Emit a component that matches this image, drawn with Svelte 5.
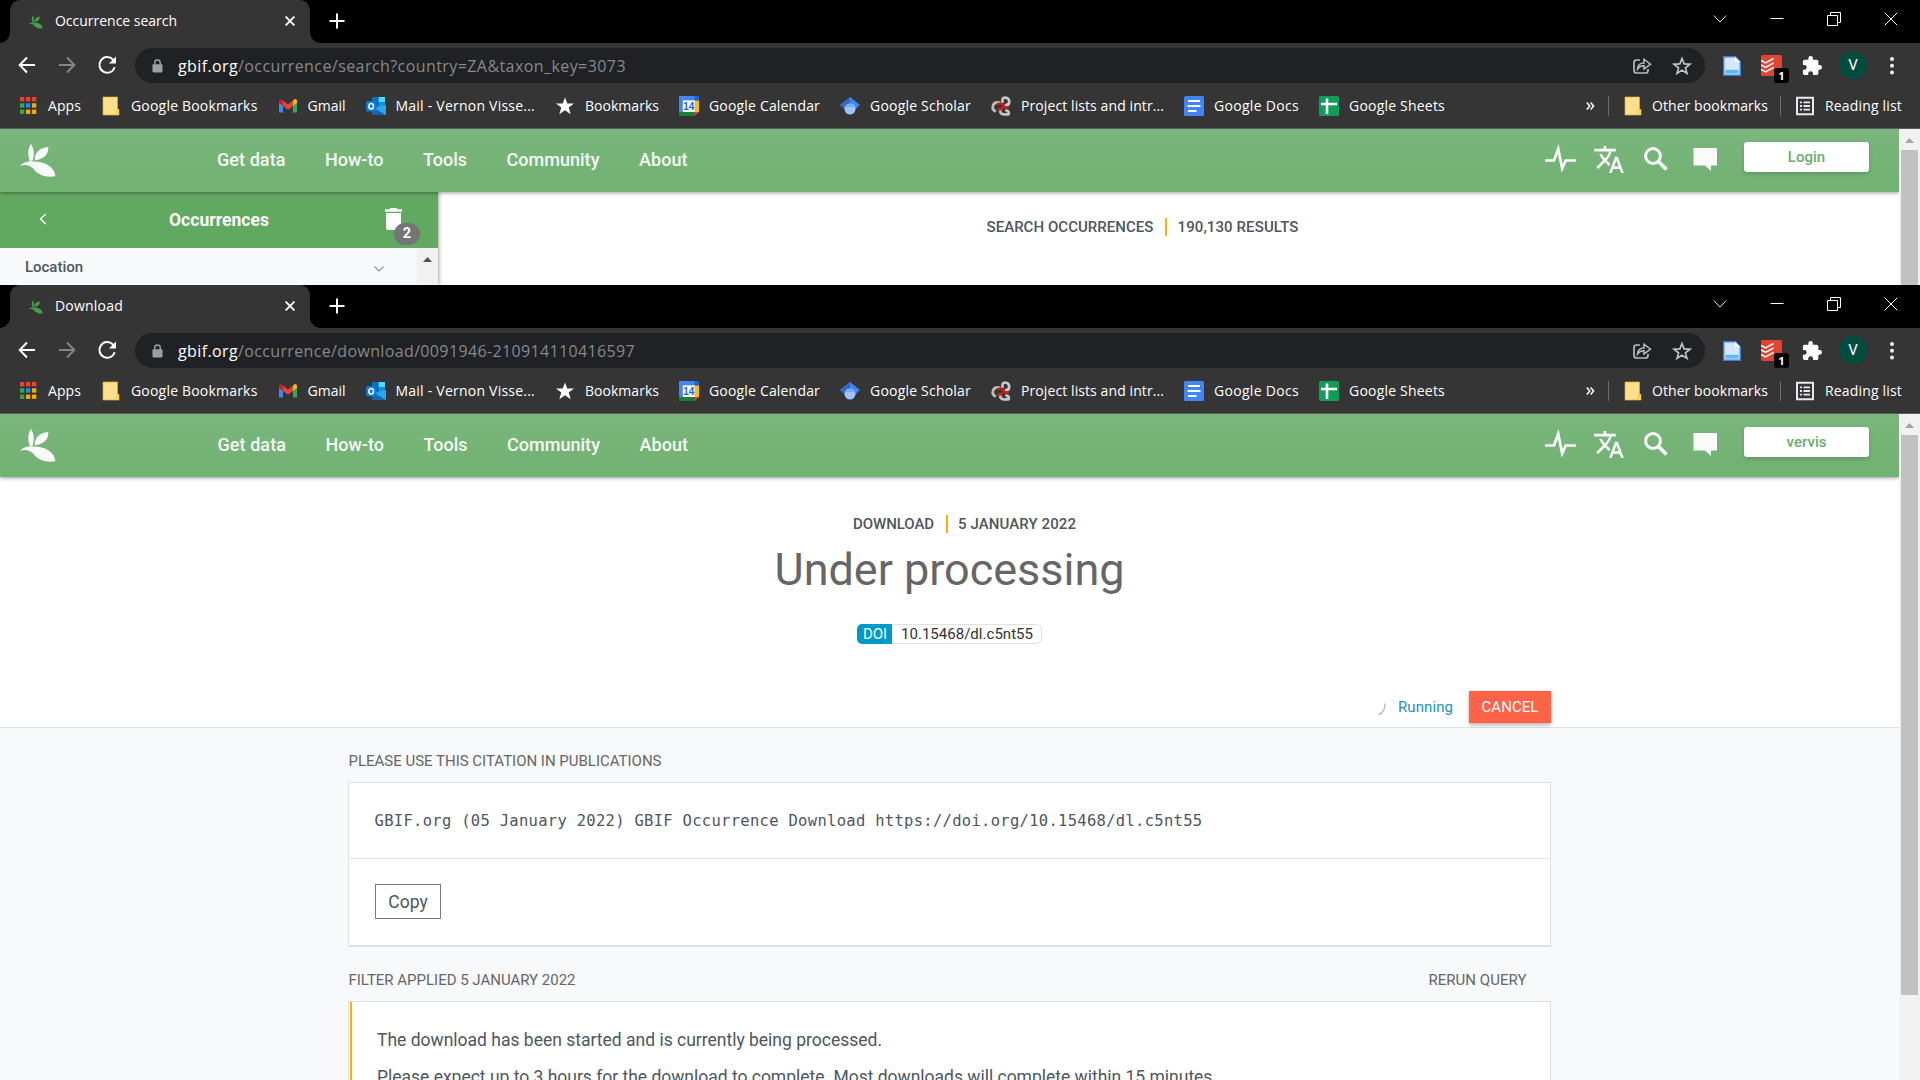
<script>
  const bookmarks = [
    { icon: 'apps', label: 'Apps', w: 33 },
    { icon: 'folder', label: 'Google Bookmarks', w: 126.5 },
    { icon: 'gmail', label: 'Gmail', w: 38 },
    { icon: 'outlook', label: 'Mail - Vernon Visse...', w: 139.5 },
    { icon: 'star', label: 'Bookmarks', w: 74 },
    { icon: 'calendar', label: 'Google Calendar', w: 111 },
    { icon: 'scholar', label: 'Google Scholar', w: 101 },
    { icon: 'project', label: 'Project lists and intr...', w: 143 },
    { icon: 'docs', label: 'Google Docs', w: 85 },
    { icon: 'sheets', label: 'Google Sheets', w: 96 }
  ];

  const nav = [
    { label: 'Get data', w: 68.5 },
    { label: 'How-to', w: 58.5 },
    { label: 'Tools', w: 44 },
    { label: 'Community', w: 93 },
    { label: 'About', w: 48.5 }
  ];

  // Tracks the text so that it fills the given width.
  function fit(node, width) {
    const natural = node.getBoundingClientRect().width;
    const spacing = (width - natural) / node.textContent.length;
    node.style.letterSpacing = `${spacing}px`;
  }
</script>

{#snippet leaf()}
  <path d="M94 175C104 190 105 212 98 229L92 230C84 212 84 192 94 175Z" />
  <path d="M147 185C146 208 135 222 106 225C104 203 120 187 147 185Z" />
  <path d="M60 244C70 232 84 227 95 230C125 226 166 240 168 274C140 279 118 269 107 258C98 246 84 233 60 244Z" />
{/snippet}

{#snippet bookmarkIcon(name)}
  <svg class="bm-icon" viewBox="0 0 20 20">
    {#if name === 'apps'}
      {#each ['#ea4335', '#ea4335', '#ea4335', '#34a853', '#1a8cff', '#f9ab00', '#34a853', '#f9ab00', '#f9ab00'] as color, i}
        <rect x={2 + (i % 3) * 6} y={1 + Math.floor(i / 3) * 6.3} width="4.3" height="4.3" fill={color} />
      {/each}
    {:else if name === 'folder'}
      <path d="M2 1h14.5v12.5H18V19H2z" fill="#ffe08a" stroke="#d9b034" stroke-width=".7" />
      <path d="M14.5 18.5v-3.8q0-1.5 2-1.5h1.5V19z" fill="#ffd257" />
    {:else if name === 'gmail'}
      <path d="M1 5v11.5h4V9z" fill="#4285f4" />
      <path d="M19 5v11.5h-4V9z" fill="#34a853" />
      <path d="M15 4.5V10l4-3.2V5q-.3-3-3-1.4z" fill="#fbbc04" />
      <path d="M1 6.8l4 3.2V4.5L4 3.6Q1.5 2.3 1 5z" fill="#c5221f" />
      <path d="M5 4.5l5 4 5-4V10l-5 3.8L5 10z" fill="#ea4335" />
    {:else if name === 'outlook'}
      <path d="M6 1h13v11H6z" fill="#1490df" />
      <path d="M12.5 1H19v5h-6.5z" fill="#50d9ff" />
      <path d="M6 6h6.5v6H6z" fill="#0364b8" />
      <path d="M12.5 1H6v5h6.5z" fill="#0a70c4" />
      <path d="M6 12l14-3v10H6z" fill="#28a8ea" />
      <path d="M6 11l14 8H6z" fill="#1565b0" />
      <rect x="0" y="5" width="10.5" height="10.5" rx="1" fill="#0f78d4" />
      <ellipse cx="5.2" cy="10.2" rx="2.3" ry="2.8" fill="none" stroke="#fff" stroke-width="1.5" />
    {:else if name === 'star'}
      <path d="M10 1.5l2.300 6H19l-5.300 4 2 6.700L10 14.300 4.300 18.200l2-6.700L1 7.500h6.700z" fill="#fff" />
    {:else if name === 'calendar'}
      <path d="M0 0h16v4.500H4.500V16H0z" fill="#4285f4" />
      <path d="M15.500 0H20v4.500h-4.500z" fill="#1967d2" />
      <path d="M15.500 4.500H20V16h-4.500z" fill="#fbbc04" />
      <path d="M0 16h15.500v4H0z" fill="#188038" />
      <path d="M15.500 16H20l-4.500 4z" fill="#ea4335" />
      <path d="M3.800 4.300h12V16h-12z" fill="#fff" />
      <text x="9.800" y="13.800" text-anchor="middle" class="cal-day">14</text>
    {:else if name === 'scholar'}
      <path d="M10 1L0 9l5 4.500h10L20 9z" fill="#4285f4" />
      <path d="M10 1L0 9l5 4.500L10 8z" fill="#356ac3" />
      <circle cx="10" cy="13" r="5.500" fill="#a0c3ff" />
      <path d="M5 11q5-6 10 0z" fill="#76a7fa" />
    {:else if name === 'project'}
      <g fill="none" stroke-width="2.700" stroke-linecap="round">
        <path d="M11.500 6Q10.800 1.600 14 1.500q4 .2 4.300 4.500-.3 3-3.300 3" stroke="#c9c9c9" />
        <path d="M8.500 6.500Q2.500 5.800 1.800 10.500q-.6 3 2 4.500" stroke="#bdbdbd" />
        <path d="M9.300 13.500Q8.500 18.300 13 18.300H17.500M17.800 18q.5-3-2.500-3.500" stroke="#c4c4c4" />
        <path d="M6.500 8.300q4.500-2.300 5.500.7t5 2.500M12.300 9.500Q12 13.500 7 14" stroke="#c81e1e" stroke-width="2.300" />
      </g>
    {:else if name === 'docs'}
      <rect width="20" height="20" rx="1.500" fill="#4285f4" />
      <path d="M4 5h12M3.500 10h13M4 15h8.500" stroke="#fff" stroke-width="2.200" />
    {:else if name === 'sheets'}
      <rect width="20" height="20" rx="1.500" fill="#0f9d58" />
      <path d="M2 8h16M8 2.500V18" stroke="#fff" stroke-width="2.600" />
    {:else if name === 'reading'}
      <path d="M2 1.800h16v16.400H2z" fill="none" stroke="#e8eaed" stroke-width="2" />
      <path d="M5 6.300h2M8.500 6.300H15M5 10h2M8.500 10H15M5 13.700h2M8.500 13.700H15" stroke="#e8eaed" stroke-width="1.800" />
    {/if}
  </svg>
{/snippet}

{#snippet chrome(tab, tabWidth, path, pathWidth)}
  <header class="chrome">
    <div class="tabs">
      <div class="tab">
        <svg class="favicon" viewBox="58 174 112 104" fill="#43a047">{@render leaf()}</svg>
        <span class="tab-title"><span use:fit={tabWidth}>{tab}</span></span>
        <svg class="tab-close" viewBox="0 0 10 10"><path d="M.6.6l8.800 8.800M9.400.6L.6 9.400" stroke="#fff" stroke-width="1.900" /></svg>
      </div>
      <svg class="plus" viewBox="0 0 16 16"><path d="M8 .5v15M.5 8h15" stroke="#fff" stroke-width="2" /></svg>
      <div class="controls">
        <svg viewBox="0 0 14 14"><path d="M.8 3.500l6.200 6.500 6.200-6.500" stroke-width=".9" /></svg>
        <svg viewBox="0 0 14 14"><path d="M.5 6.500h13" /></svg>
        <svg viewBox="0 0 14 14"><path d="M.5 3.500h10v10H.5zM3.500 3.500v-3h10v10h-3" /></svg>
        <svg viewBox="0 0 14 14"><path d="M.7.700l12.600 12.600M13.300.700L.7 13.300" /></svg>
      </div>
    </div>

    <div class="toolbar">
      <svg class="tool" viewBox="0 0 20 20"><path d="M18 10H3M10 2.500L2.700 10l7.300 7.500" stroke="#fff" /></svg>
      <svg class="tool" viewBox="0 0 20 20"><path d="M2 10h15M10 2.500l7.300 7.500-7.300 7.500" stroke="#858585" /></svg>
      <svg class="tool" viewBox="0 0 20 20">
        <path d="M17.700 12.200a7.800 7.800 0 1 1-1.900-7.800L18 7" stroke="#fff" />
        <path d="M19 1.500V8.500H12z" fill="#fff" />
      </svg>
      <div class="omnibox">
        <svg class="lock" viewBox="0 0 12 16">
          <path d="M3 7V4.500a3 3 0 0 1 6 0V7" fill="none" stroke="#9aa0a6" stroke-width="1.600" />
          <rect x=".5" y="6" width="11" height="9" rx="1.200" fill="#9aa0a6" />
        </svg>
        <span class="host" use:fit={60}>gbif.org</span><span class="path" use:fit={pathWidth}>{path}</span>
        <span class="spring"></span>
        <svg class="omni-icon" viewBox="0 0 20 20" fill="none" stroke="#b9bbbe" stroke-width="1.700">
          <path d="M8 4H4.500Q2 4 2 6.500v8Q2 17 4.500 17h9q2.500 0 2.500-2.500V13" />
          <path d="M5.500 13q.5-6 6.500-6V3.200L18.500 8.200 12 13V9.800q-4-.3-6.500 3.200z" stroke-width="1.500" />
        </svg>
        <svg class="omni-icon" viewBox="0 0 20 20" fill="none" stroke="#c4c6c9" stroke-width="1.600">
          <path d="M10 2.500l2.100 5.400 5.900.3-4.600 3.600 1.600 5.600-5-3.200-5 3.200 1.600-5.600L2 8.200l5.900-.3z" />
        </svg>
      </div>
      <div class="extensions">
        <svg class="ext-doc" viewBox="0 0 18 20">
          <path d="M.7.700h11.800L17.300 6v13.300H.7z" fill="#d6e6fb" stroke="#3b82dc" stroke-width="1.400" />
          <path d="M12 .7V6h5.300z" fill="#fff" />
          <path d="M2.500 13.800h13v3.700h-13z" fill="#5bb8f5" />
        </svg>
        <div class="todoist">
          <svg viewBox="0 0 21 21">
            <rect width="21" height="21" rx="1.800" fill="#e44332" />
            <path d="M0 5.500l4.500 2.400 8-4.400M0 10l4.500 2.400 8-4.400M0 14.500l4.500 2.400 8-4.400" fill="none" stroke="#fff" stroke-width="1.500" />
          </svg>
          <span class="count">1</span>
        </div>
        <svg class="puzzle" viewBox="1 1 22 22"><path fill="#fff" d="M20.500 11H19V7c0-1.100-.9-2-2-2h-4V3.500a2.500 2.500 0 0 0-5 0V5H4c-1.100 0-2 .9-2 2v3.800h1.500a2.700 2.700 0 0 1 0 5.400H2V20c0 1.100.9 2 2 2h3.800v-1.500a2.700 2.700 0 0 1 5.400 0V22H17c1.100 0 2-.9 2-2v-4h1.500a2.500 2.500 0 0 0 0-5z" /></svg>
        <span class="avatar">V</span>
        <svg class="dots" viewBox="0 0 4 18" fill="#f1f1f1"><circle cx="2" cy="2" r="2" /><circle cx="2" cy="8.700" r="2" /><circle cx="2" cy="15.400" r="2" /></svg>
      </div>
    </div>

    <nav class="bookmarks">
      {#each bookmarks as item}
        <div class="bookmark">
          {@render bookmarkIcon(item.icon)}
          <span class="bm-label" style:width="{item.w}px"><span use:fit={item.w}>{item.label}</span></span>
        </div>
      {/each}
      <div class="bookmark-end">
        <svg class="more" viewBox="0 0 9 8"><path d="M.8.600l3 3.400-3 3.400M4.600.600l3 3.400-3 3.400" fill="none" stroke="#fff" stroke-width="1.500" /></svg>
        <i class="rule"></i>
        {@render bookmarkIcon('folder')}
        <span class="bm-label other"><span use:fit={116}>Other bookmarks</span></span>
        <i class="rule"></i>
        {@render bookmarkIcon('reading')}
        <span class="bm-label reading"><span use:fit={77}>Reading list</span></span>
      </div>
    </nav>
  </header>
{/snippet}

{#snippet siteHeader(user, userWidth)}
  <div class="site-header">
    <svg class="logo" viewBox="58 174 112 104" fill="#fafafa">{@render leaf()}</svg>
    <nav class="site-nav">
      {#each nav as item}
        <span class="nav-item" style:width="{item.w}px"><span use:fit={item.w}>{item.label}</span></span>
      {/each}
    </nav>
    <div class="site-tools">
      <svg class="pulse" viewBox="0 0 31 28"><path d="M0 16.500h9L13.200 5l4 19.500 3.500-8H31" fill="none" stroke="#fafafa" stroke-width="2.700" /></svg>
      <svg class="translate" viewBox="1 2 22 20"><path fill="#fafafa" d="M12.870 15.070l-2.540-2.510.03-.03A17.520 17.520 0 0 0 14.070 6H17V4h-7V2H8v2H1v2h11.170C11.500 7.920 10.440 9.750 9 11.350 8.070 10.320 7.300 9.190 6.690 8h-2c.73 1.630 1.730 3.170 2.980 4.560l-5.090 5.020L4 19l5-5 3.110 3.110.76-2.040zM18.500 10h-2L12 22h2l1.120-3h4.750L21 22h2l-4.500-12zm-2.620 7l1.620-4.330L19.120 17h-3.240z" /></svg>
      <svg class="search" viewBox="0 0 24 24" fill="none" stroke="#fafafa"><circle cx="9" cy="9" r="7.400" stroke-width="3" /><path d="M14.500 14.500l8 8" stroke-width="3.800" /></svg>
      <svg class="chat" viewBox="0 0 24 23"><path d="M.5 0H24v17.500h-6V23l-6-5.500H.5z" fill="#fafafa" /></svg>
      <button class="user"><span use:fit={userWidth}>{user}</span></button>
    </div>
  </div>
{/snippet}

<div class="screen">
  <section class="window first">
    {@render chrome('Occurrence search', 122, '/occurrence/search?country=ZA&taxon_key=3073', 388)}
    <div class="viewport">
      <div class="page">
        {@render siteHeader('Login', 37.5)}
        <div class="search-layout">
          <aside>
            <div class="side-head">
              <svg class="back" viewBox="0 0 8 12"><path d="M6.800 1L1.500 6l5.300 5" fill="none" stroke="#fff" stroke-width="1.400" /></svg>
              <strong><span use:fit={100}>Occurrences</span></strong>
              <div class="trash">
                <svg viewBox="0 0 17 22"><path d="M0 1.300h4.500L5.500 0h6l1 1.300H17v2.400H0zM1 5h15v15q0 2-2 2H3q-2 0-2-2z" fill="#fff" /></svg>
                <span class="badge">2</span>
              </div>
            </div>
            <div class="side-body">
              <div class="facet">
                <span use:fit={58}>Location</span>
                <svg viewBox="0 0 10 6"><path d="M.5.500L5 5 9.500.500" fill="none" stroke="#8b959e" stroke-width="1.100" /></svg>
              </div>
              <div class="side-scroll"><svg viewBox="0 0 9 5"><path d="M0 5L4.500 0 9 5z" fill="#505050" /></svg></div>
            </div>
          </aside>
          <div class="crumbs results">
            <span use:fit={167}>SEARCH OCCURRENCES</span><i></i><span use:fit={121}>190,130 RESULTS</span>
          </div>
        </div>
      </div>
      <div class="scrollbar"><svg viewBox="0 0 9 5"><path d="M0 5L4.500 0 9 5z" fill="#a3a3a3" /></svg><div class="thumb"></div></div>
    </div>
  </section>

  <section class="window second">
    {@render chrome('Download', 68, '/occurrence/download/0091946-210914110416597', 397)}
    <div class="viewport">
      <div class="page">
        {@render siteHeader('vervis', 40)}
        <div class="hero">
          <div class="crumbs">
            <span use:fit={81}>DOWNLOAD</span><i></i><span use:fit={118}>5 JANUARY 2022</span>
          </div>
          <h1><span use:fit={350}>Under processing</span></h1>
          <div class="doi">
            <span class="doi-tag"><span use:fit={24}>DOI</span></span>
            <span class="doi-id"><span use:fit={132}>10.15468/dl.c5nt55</span></span>
          </div>
          <div class="status">
            <svg class="spinner" viewBox="0 0 8 13"><path d="M6.900.500Q7.500 8.500.6 11.800" fill="none" stroke="#bfbfbf" stroke-width="1.500" /></svg>
            <span class="running"><span use:fit={55}>Running</span></span>
            <button class="cancel"><span use:fit={57}>CANCEL</span></button>
          </div>
        </div>
        <main>
          <div class="section-head"><span use:fit={313}>PLEASE USE THIS CITATION IN PUBLICATIONS</span></div>
          <div class="card citation">
            <div class="cite-text"><span use:fit={828}>GBIF.org (05 January 2022) GBIF Occurrence Download https://doi.org/10.15468/dl.c5nt55</span></div>
            <div class="cite-actions"><button class="copy"><span use:fit={39.5}>Copy</span></button></div>
          </div>
          <div class="section-head">
            <span use:fit={227}>FILTER APPLIED 5 JANUARY 2022</span>
            <span use:fit={98}>RERUN QUERY</span>
          </div>
          <div class="card filter">
            <div class="notice">
              <p><span use:fit={505}>The download has been started and is currently being processed.</span></p>
              <p><span use:fit={840}>Please expect up to 3 hours for the download to complete. Most downloads will complete within 15 minutes.</span></p>
            </div>
          </div>
        </main>
      </div>
      <div class="scrollbar"><svg viewBox="0 0 9 5"><path d="M0 5L4.500 0 9 5z" fill="#a3a3a3" /></svg><div class="thumb"></div></div>
    </div>
  </section>
</div>

<style>
  :global(body) { margin: 0; overflow: hidden; }
  * { box-sizing: border-box; }
  svg { display: block; flex: none; }
  button { font: inherit; padding: 0; border: 0; }
  span { white-space: nowrap; }

  .screen { width: 1920px; height: 1080px; overflow: hidden; display: flex; flex-direction: column; background: #fff; }
  .window { display: flex; flex-direction: column; flex: none; overflow: hidden; }
  .first { height: 285px; }
  .second { height: 795px; }

  /* Browser chrome */
  .chrome { flex: none; height: 129px; background: #353535; border-bottom: 1px solid #5f5c61; font: 14px/20px "Open Sans", "Noto Sans", sans-serif; color: #fff; }
  .tabs { height: 43px; background: #000; display: flex; align-items: flex-start; padding-left: 10px; }
  .tab { position: relative; width: 300px; height: 43px; background: #353535; border-radius: 10px 10px 0 0; display: flex; align-items: center; padding-left: 18px; }
  .tab::before, .tab::after { content: ""; position: absolute; bottom: 0; width: 10px; height: 10px; }
  .tab::before { left: -10px; background: radial-gradient(circle at 0 0, #000 9.500px, #353535 10px); }
  .tab::after { right: -10px; background: radial-gradient(circle at 100% 0, #000 9.500px, #353535 10px); }
  .favicon { width: 15px; height: 14px; }
  .tab-title { width: 232px; margin-left: 12px; margin-top: -2px; }
  .tab-close { width: 10px; height: 10px; margin-left: -2px; margin-top: -1px; }
  .plus { width: 16px; height: 16px; margin: 13px 0 0 19px; }
  .controls { margin: 12px 22px 0 auto; display: flex; gap: 43px; }
  .controls svg { width: 14px; height: 14px; fill: none; stroke: #fff; stroke-width: 1; }

  .toolbar { height: 40px; padding: 5px 25px 0 17px; display: flex; align-items: center; }
  .tool { width: 20px; height: 20px; margin-right: 20px; margin-top: -2px; fill: none; stroke-width: 2; }
  .omnibox { width: 1570px; height: 35px; margin-left: -2px; border-radius: 18px; background: #202124; display: flex; align-items: center; padding: 0 13px 0 17px; font-size: 16px; line-height: 34px; }
  .lock { width: 11px; height: 16px; margin-right: 15px; }
  .path { color: #86898d; }
  .spring { flex: 1; }
  .omni-icon { width: 20px; height: 20px; margin-left: 20px; }
  .extensions { display: flex; align-items: center; margin-left: 18px; }
  .ext-doc { width: 18px; height: 20px; }
  .todoist { position: relative; width: 21px; height: 21px; margin-left: 20px; }
  .todoist svg { width: 21px; height: 21px; }
  .count { position: absolute; left: 13px; top: 13px; width: 15px; height: 15px; border-radius: 3px; background: #000; font: 700 11px/16px "Open Sans", sans-serif; text-align: center; }
  .puzzle { width: 20px; height: 20px; margin-left: 20px; }
  .avatar { width: 28px; height: 28px; margin-left: 17px; margin-top: -1px; border-radius: 50%; background: #004d40; font: 15px/28px Roboto, sans-serif; text-align: center; }
  .dots { width: 4px; height: 18px; margin-left: 23px; }

  .bookmarks { height: 45px; padding: 1px 18px 0; display: flex; align-items: center; gap: 20px; }
  .bookmark { display: flex; align-items: center; gap: 10px; }
  .bm-icon { width: 20px; height: 20px; overflow: visible; }
  .bm-label { display: block; }
  .cal-day { font: 700 10px "Liberation Sans", sans-serif; fill: #1967d2; }
  .bookmark-end { margin-left: auto; display: flex; align-items: center; }
  .more { width: 9px; height: 8px; margin: -1px 13px 0 0; }
  .rule { width: 1px; height: 20px; background: #6b6b6b; margin-right: 14px; }
  .other { width: 116px; margin: 0 12px 0 9px; }
  .reading { width: 77px; margin-left: 10px; }

  /* Web page */
  .viewport { flex: 1; display: flex; min-height: 0; font-family: Roboto, sans-serif; }
  .page { width: 1899px; display: flex; flex-direction: column; overflow: hidden; background: #fff; }
  .scrollbar { width: 21px; background: #f1f1f1; display: flex; flex-direction: column; align-items: center; padding-top: 9px; }
  .scrollbar svg { width: 9px; height: 5px; }
  .thumb { width: 17px; height: 560px; margin-top: 7px; background: #c1c1c1; flex: none; }

  .site-header { position: relative; z-index: 2; flex: none; height: 63px; background: linear-gradient(#7ab67c, #71b172); box-shadow: 0 1px 4px rgba(0, 0, 0, .4); display: flex; padding-left: 19px; }
  .logo { width: 37px; height: 35px; margin-top: 14px; }
  .site-nav { display: flex; gap: 39.500px; margin-left: 161px; font-weight: 500; font-size: 18px; line-height: 62px; color: #f5faf5; }
  .second .site-nav { margin-left: 161.500px; }
  .nav-item { display: block; }
  .site-tools { display: flex; align-items: flex-start; margin-left: auto; padding: 13px 30px 0 0; }
  .pulse { width: 31px; height: 28px; margin-top: 2px; }
  .translate { width: 30px; height: 27px; margin: 4px 0 0 18px; }
  .search { width: 24px; height: 24px; margin: 5px 0 0 20px; }
  .chat { width: 24px; height: 23px; margin: 6px 0 0 25px; }
  .user { width: 125px; height: 30px; margin-left: 27px; border-radius: 3px; background: #fff; color: #69ad6c; font-size: 15px; font-weight: 500; line-height: 30px; box-shadow: 0 2px 4px rgba(0, 0, 0, .16); }

  .search-layout { flex: 1; display: flex; }
  aside { width: 438px; display: flex; flex-direction: column; box-shadow: 1px 0 4px rgba(0, 0, 0, .35); }
  .side-head { height: 56px; background: #61a961; color: #fff; display: flex; align-items: center; padding-left: 39px; }
  .back { width: 8px; height: 12px; margin-top: -3px; }
  .side-head strong { width: 216px; margin-left: 122px; font-size: 17.500px; line-height: 56px; font-weight: 700; }
  .trash { position: relative; width: 17px; height: 22px; margin-top: -2px; }
  .trash svg { width: 17px; height: 22px; }
  .badge { position: absolute; left: 9px; top: 15px; width: 26px; height: 22px; border-radius: 11px; background: #757575; font-weight: 700; font-size: 14.500px; line-height: 22px; text-align: center; }
  .side-body { flex: 1; display: flex; background: #f8f9fb; }
  .facet { width: 417px; display: flex; align-items: center; justify-content: space-between; padding: 0 33px 0 25px; font-size: 15px; font-weight: 500; color: #4e565f; }
  .facet svg { width: 10px; height: 6px; margin-top: 4px; }
  .side-scroll { width: 21px; background: #f1f1f1; display: flex; justify-content: center; padding-top: 9px; }
  .side-scroll svg { width: 9px; height: 5px; }

  .crumbs { display: flex; justify-content: center; align-items: center; height: 18px; font-size: 15px; line-height: 18px; font-weight: 500; color: #4e565f; }
  .crumbs i { width: 2px; height: 18px; margin: 0 10.500px 0 11.500px; background: #ffb000; }
  .results { margin: 26px 0 0 548.500px; align-self: flex-start; }

  .hero { flex: none; height: 251px; padding-top: 38px; border-bottom: 1px solid #dbe3e7; display: flex; flex-direction: column; align-items: center; }
  .hero .crumbs { padding-left: 30px; }
  h1 { margin: 10px 0 0; font-size: 45px; line-height: 54px; font-weight: 400; color: #666; }
  .doi { height: 20px; margin-top: 27px; display: flex; font-size: 15px; line-height: 18px; }
  .doi-tag { width: 35px; border-radius: 5px 0 0 5px; background: #09c; color: #fff; padding-left: 6px; line-height: 20px; }
  .doi-id { width: 150px; border: 1px solid #dbe3e7; border-left: 0; border-radius: 0 6px 6px 0; padding-left: 9px; color: #333; }
  .status { width: 1203px; height: 32px; margin-top: 47px; display: flex; justify-content: flex-end; align-items: center; font-size: 15px; }
  .spinner { width: 8px; height: 13px; margin: 5px 12px 0 0; }
  .running { width: 55px; margin-right: 16px; color: #1c93c4; }
  .cancel { width: 82px; height: 32px; background: #ff6347; color: #fff; line-height: 32px; box-shadow: 0 2px 4px rgba(0, 0, 0, .3); }

  main { flex: 1; padding: 0 348px; background: #f8f9fb; min-height: 0; }
  .section-head { display: flex; justify-content: space-between; height: 54px; padding: 24px 24.500px 0 .5px; font-size: 15px; line-height: 18px; color: #666; }
  .card { background: #fff; border: 1px solid #dbe3e7; color: #4e565f; }
  .citation { height: 165px; border-bottom-width: 2px; }
  .cite-text { height: 76px; margin-left: 1px; border-bottom: 1px solid #dbe3e7; padding-left: 24.500px; font: 15.500px/76px "DejaVu Sans Mono", "Liberation Mono", monospace; }
  .cite-actions { padding: 25px 0 0 26px; }
  .copy { display: block; width: 66px; height: 35px; padding-top: 1px; border: 1px solid #7b7b7b; background: #fff; color: #4e565f; font-size: 17.500px; line-height: 32px; }
  .filter { height: 140px; padding-left: 1px; }
  .notice { height: 100%; border-left: 2px solid #ffb000; padding: 20px 0 0 25px; font-size: 17.500px; line-height: 37px; }
  .notice p { margin: 0; }
</style>
